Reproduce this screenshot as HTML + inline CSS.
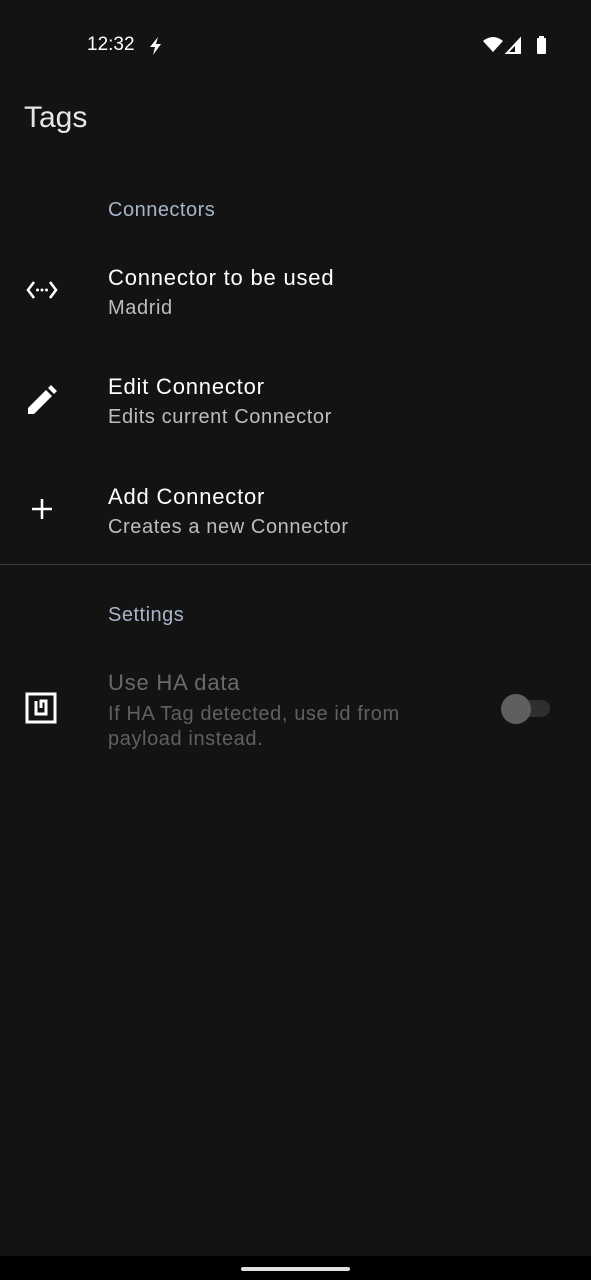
<!DOCTYPE html>
<html><head><meta charset="utf-8"><style>
body{margin:0;width:591px;height:1280px;background:#131313;font-family:"Liberation Sans",sans-serif;position:relative;overflow:hidden;color:#fff}
.a{position:absolute;white-space:nowrap}
.t{font-size:22px;color:#fff;letter-spacing:0.8px}
.s{font-size:20px;color:#bdbdbd;letter-spacing:0.6px}
.h{font-size:20px;color:#a8b4c8;letter-spacing:0.5px}
</style></head><body>
<div class="a" style="left:87px;top:34px;font-size:19px">12:32</div>
<svg class="a" style="left:147px;top:36px" width="18" height="20" viewBox="0 0 18 20"><path d="M11 1L3 11h5l-2 8 8-11H9z" fill="#fff"/></svg>
<svg class="a" style="left:482px;top:35px" width="70" height="20" viewBox="0 0 70 20"><path d="M1 6Q11 -2 21 6L11 17z" fill="#fff"/><path d="M25 18L38 4V18z" fill="none" stroke="#fff" stroke-width="2"/><path d="M33 10L38 5V18H33z" fill="#fff"/><rect x="55" y="3" width="9" height="16" rx="1" fill="#fff"/><rect x="57" y="1" width="5" height="3" fill="#fff"/></svg>
<div class="a" style="left:24px;top:101px;font-size:30px;color:#e6e6e6">Tags</div>
<div class="a h" style="left:108px;top:199px">Connectors</div>
<svg class="a" style="left:26px;top:280px" width="32" height="20" viewBox="0 0 32 20"><path d="M8 2L2 10l6 8M24 2l6 8-6 8" fill="none" stroke="#fff" stroke-width="2.6"/><circle cx="11.5" cy="10" r="1.5" fill="#fff"/><circle cx="16" cy="10" r="1.5" fill="#fff"/><circle cx="20.5" cy="10" r="1.5" fill="#fff"/></svg>
<div class="a t" style="left:108px;top:265px">Connector to be used</div>
<div class="a s" style="left:108px;top:297px">Madrid</div>
<svg class="a" style="left:27px;top:385px" width="30" height="30" viewBox="0 0 30 30"><path d="M1 29v-6L19 5l6 6L7 29z M21 3l3-3 6 6-3 3z" fill="#fff"/></svg>
<div class="a t" style="left:108px;top:374px">Edit Connector</div>
<div class="a s" style="left:108px;top:406px">Edits current Connector</div>
<svg class="a" style="left:31px;top:498px" width="22" height="22" viewBox="0 0 22 22"><path d="M11 1v20M1 11h20" stroke="#fff" stroke-width="2.5"/></svg>
<div class="a t" style="left:108px;top:484px">Add Connector</div>
<div class="a s" style="left:108px;top:516px">Creates a new Connector</div>
<div class="a" style="left:0;top:564px;width:591px;height:1px;background:#3c3c3c"></div>
<div class="a h" style="left:108px;top:604px">Settings</div>
<svg class="a" style="left:25px;top:692px" width="32" height="32" viewBox="0 0 32 32"><rect x="2" y="2" width="28" height="28" fill="none" stroke="#fff" stroke-width="3"/><path d="M11 9v13h10V9h-5v7" fill="none" stroke="#fff" stroke-width="3"/></svg>
<div class="a" style="left:108px;top:670px;font-size:22px;color:#6a6a6a;letter-spacing:0.8px">Use HA data</div>
<div class="a" style="left:108px;top:702px;font-size:20px;color:#606060;line-height:25px;white-space:normal;width:320px;letter-spacing:0.6px">If HA Tag detected, use id from payload instead.</div>
<div class="a" style="left:504px;top:700px;width:46px;height:17px;border-radius:9px;background:#2f2f2f"></div>
<div class="a" style="left:501px;top:694px;width:30px;height:30px;border-radius:50%;background:#5f5f5f"></div>
<div class="a" style="left:0;top:1256px;width:591px;height:24px;background:#000"></div>
<div class="a" style="left:241px;top:1267px;width:109px;height:4px;border-radius:2px;background:#e0e0e0"></div>
</body></html>
